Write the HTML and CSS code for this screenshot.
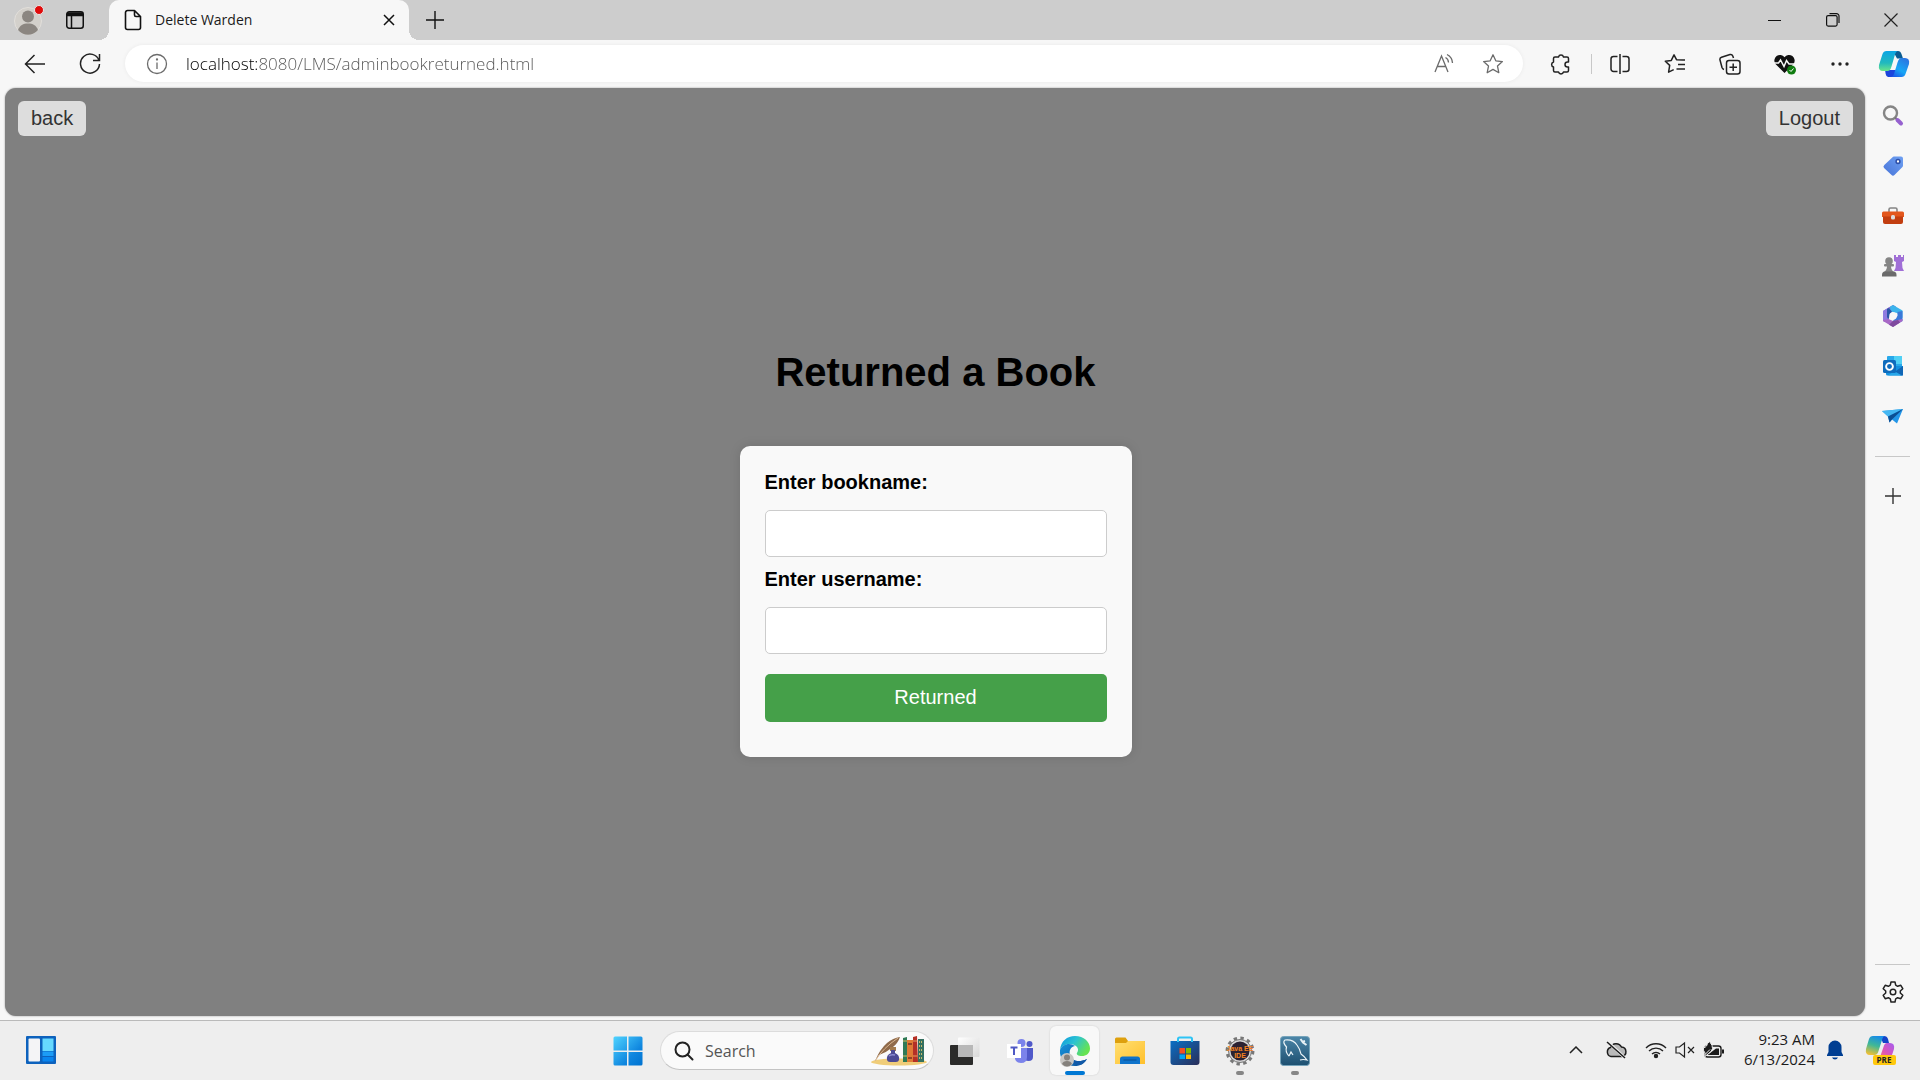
FILE: index.html
```html
<!DOCTYPE html>
<html lang="en">
<head>
<meta charset="utf-8">
<title>Delete Warden</title>
<link rel="stylesheet" href="styles.css">
</head>
<body>
<header class="titlebar">
  <button class="chrome-btn profile" aria-label="Profile">
    <svg width="30" height="32" viewBox="0 0 30 32"><circle cx="14" cy="17" r="13.500" fill="#d3d0cb" stroke="#e2dfdb"/><circle cx="14" cy="12.500" r="6" fill="#8b8681"/><path d="M4 26c2-5 5-6.500 10-6.500S22 21 24 26a13 13 0 0 1-20 0z" fill="#8b8681"/><circle cx="25" cy="6" r="4.500" fill="#e00b0b" stroke="#e8e8e8"/></svg>
  </button>
  <button class="chrome-btn tab-actions" aria-label="Tab actions">
    <svg width="20" height="20" viewBox="0 0 20 20" fill="none" stroke="#111" stroke-width="1.500"><rect x="1.750" y="1.750" width="16.500" height="16.500" rx="2.500"/><path d="M2 3.500h16M2 5h16" stroke-width="2.500"/><path d="M6.500 6v12"/></svg>
  </button>
  <div class="tab">
    <svg width="18" height="22" viewBox="0 0 18 22" fill="none" stroke="#111" stroke-width="1.600" stroke-linejoin="round"><path d="M3.500 1.500h7l6 6v11a2 2 0 0 1-2 2h-11a2 2 0 0 1-2-2v-15a2 2 0 0 1 2-2zM10.500 1.500v4.500a1.500 1.500 0 0 0 1.500 1.500h4.500"/></svg>
    <span class="tab-title">Delete Warden</span>
    <button class="chrome-btn tab-close" aria-label="Close tab"><svg width="12" height="12" viewBox="0 0 12 12" stroke="#111" stroke-width="1.500"><path d="M1 1l10 10M11 1L1 11"/></svg></button>
  </div>
  <button class="chrome-btn new-tab" aria-label="New tab"><svg width="18" height="18" viewBox="0 0 18 18" stroke="#111" stroke-width="1.400"><path d="M9 0v18M0 9h18"/></svg></button>
  <div class="window-controls">
    <button class="chrome-btn" aria-label="Minimize"><svg width="14" height="14" viewBox="0 0 14 14"><path d="M0 7.500h13" stroke="#111"/></svg></button>
    <button class="chrome-btn" aria-label="Restore"><svg width="14" height="14" viewBox="0 0 14 14" fill="none" stroke="#111" stroke-width="1.200"><rect x=".6" y="2.600" width="10.500" height="10.500" rx="1.500"/><path d="M3.500.6h7a2.500 2.500 0 0 1 2.500 2.500v7"/></svg></button>
    <button class="chrome-btn" aria-label="Close"><svg width="14" height="14" viewBox="0 0 14 14" stroke="#222" stroke-width="1.200"><path d="M.5.5l13 13M13.500.5l-13 13"/></svg></button>
  </div>
</header>

<nav class="toolbar" aria-label="Browser toolbar">
  <button class="chrome-btn nav-btn" aria-label="Back"><svg width="22" height="20" viewBox="0 0 22 20" fill="none" stroke="#222" stroke-width="1.500"><path d="M21 10H1.500M10.500 1l-9 9 9 9"/></svg></button>
  <button class="chrome-btn nav-btn" aria-label="Refresh"><svg width="22" height="22" viewBox="0 0 22 22" fill="none" stroke="#222" stroke-width="1.500"><path d="M20 7.500A9.500 9.500 0 1 0 20.500 11M20.500 1v6.500H14"/></svg></button>
  <div class="address">
    <button class="chrome-btn" aria-label="Site information"><svg width="22" height="22" viewBox="0 0 22 22" fill="none" stroke="#6b6b6b" stroke-width="1.300"><circle cx="11" cy="11" r="9.500"/><path d="M11 9.500v6.500"/><circle cx="11" cy="6.500" r=".5" fill="#6b6b6b"/></svg></button>
    <input class="address-input" type="text" aria-label="Address" value="localhost:8080/LMS/adminbookreturned.html">
    <button class="chrome-btn address-btn" aria-label="Read aloud"><svg width="22" height="22" viewBox="0 0 22 22" fill="none" stroke="#6b6b6b" stroke-width="1.300"><path d="M2 19L8.500 3 15 19M4.500 13.500h8"/><path d="M12.500 4.500a6 6 0 0 1 3 5M14 1.500a10 10 0 0 1 5.500 8.500"/></svg></button>
    <button class="chrome-btn address-btn" aria-label="Add to favorites"><svg width="22" height="22" viewBox="0 0 22 22" fill="none" stroke="#6b6b6b" stroke-width="1.300" stroke-linejoin="round"><path d="M11 1.800l2.800 6 6.600.8-4.900 4.500 1.300 6.600-5.800-3.300-5.800 3.300 1.300-6.600L1.600 8.600l6.600-.8z"/></svg></button>
  </div>
  <div class="toolbar-extras">
    <button class="chrome-btn" aria-label="Extensions"><svg width="22" height="22" viewBox="0 0 22 22" fill="none" stroke="#222" stroke-width="1.500" stroke-linejoin="round"><path d="M5 4h3.500a2.600 2.600 0 0 1 5 0H17q1.500 0 1.500 1.500V9h-1a2.500 2.500 0 0 0 0 5h1v3.500q0 1.500-1.500 1.500h-3.500a2.600 2.600 0 0 1-5 0H5q-1.500 0-1.500-1.500V14a2.600 2.600 0 0 1 0-5V5.500Q3.500 4 5 4z"/></svg></button>
    <span class="toolbar-rule"></span>
    <button class="chrome-btn" aria-label="Split screen"><svg width="20" height="22" viewBox="0 0 20 22" fill="none" stroke="#222" stroke-width="1.500"><path d="M7.500 3.500h-4a2.500 2.500 0 0 0-2.500 2.500v10a2.500 2.500 0 0 0 2.500 2.500h4M12.500 3.500h4A2.500 2.500 0 0 1 19 6v10a2.500 2.500 0 0 1-2.500 2.500h-4M10 1v20"/></svg></button>
    <button class="chrome-btn" aria-label="Favorites"><svg width="22" height="22" viewBox="0 0 22 22" fill="none" stroke="#222" stroke-width="1.500" stroke-linejoin="round"><path d="M19 7l-6.500-.3L10 1.800 7.300 7.400l-6 .8 4.400 4.200-1.100 6.800 5.100-2.600M12.500 7H21M14 11.500h7M12.500 16H21"/></svg></button>
    <button class="chrome-btn" aria-label="Collections"><svg width="22" height="22" viewBox="0 0 22 22" fill="none" stroke="#222" stroke-width="1.500"><rect x="7.500" y="7.500" width="13.500" height="13.500" rx="2.500"/><path d="M14.200 10.500v7.500M10.500 14.200H18M5 16.500q-1.500-.5-2-2L1 7Q.5 5 2.500 4.300L11 1.500q2-.5 2.800 1.500l.7 2"/></svg></button>
    <button class="chrome-btn" aria-label="Browser essentials"><svg width="24" height="22" viewBox="0 0 24 22"><path d="M11.500 20L2.500 11A5.600 5.600 0 0 1 11.500 4.200 5.600 5.600 0 0 1 20.500 11z" fill="#111"/><path d="M0 10h5.500l2-3 3.500 6.500 2.500-6 2.500 3.500h6" fill="none" stroke="#f7f7f7" stroke-width="1.500"/><circle cx="18.500" cy="17" r="4.500" fill="#107c10"/><path d="M16.500 17l1.500 1.500 2.500-3" fill="none" stroke="#fff"/></svg></button>
    <button class="chrome-btn" aria-label="Settings and more"><svg width="18" height="6" viewBox="0 0 18 6" fill="#222"><circle cx="2" cy="3" r="1.700"/><circle cx="9" cy="3" r="1.700"/><circle cx="16" cy="3" r="1.700"/></svg></button>
    <button class="chrome-btn copilot-btn" aria-label="Copilot"><svg width="32" height="28" viewBox="0 0 32 28"><defs><linearGradient id="ca" x1="0" y1="0" x2="0" y2="1"><stop offset="0" stop-color="#0aa5e5"/><stop offset=".6" stop-color="#22b9bd"/><stop offset="1" stop-color="#6ae58a"/></linearGradient><linearGradient id="cb" x1=".8" y1="0" x2=".2" y2="1"><stop offset="0" stop-color="#2d74e0"/><stop offset=".6" stop-color="#18a7f5"/><stop offset="1" stop-color="#1a5ae8"/></linearGradient></defs><path d="M15 1h5q2.500 0 3.500 3l1.500 4.500h-6z" fill="#0a5c92"/><path d="M10 27h6l3-7H7l.7 4q.6 3 2.300 3z" fill="#1b45dc"/><path d="M8.500 1H20q-2 0-3 3.500l-3.500 12Q12.300 21 9.500 21H5Q0 21 1 15L4.500 4Q5.500 1 8.500 1z" fill="url(#ca)"/><path d="M23.500 27H13q2 0 3-3l3.500-11.500Q21 8 23 8h4q5 0 4 6l-3.500 10q-1 3-4 3z" fill="url(#cb)"/></svg></button>
  </div>
</nav>

<div class="workspace">
  <main class="page">
    <div class="page-actions">
      <button class="link-btn">back</button>
      <button class="link-btn">Logout</button>
    </div>
    <div class="page-content">
      <h1 class="page-heading">Returned a Book</h1>
      <form class="card">
        <label class="field-label" for="bookname">Enter bookname:</label>
        <input class="field" id="bookname" type="text">
        <label class="field-label" for="username">Enter username:</label>
        <input class="field" id="username" type="text">
        <button class="submit" type="button">Returned</button>
      </form>
    </div>
  </main>
  <aside class="sidebar" aria-label="Sidebar">
    <button class="chrome-btn" aria-label="Search"><svg width="22" height="22" viewBox="0 0 22 22" fill="none"><circle cx="8.500" cy="8" r="6.500" stroke="#858585" stroke-width="2.400"/><path d="M13 12.500l3 3" stroke="#777" stroke-width="2"/><path d="M15.500 15l3.500 3.500" stroke="#9661cf" stroke-width="4" stroke-linecap="round"/></svg></button>
    <button class="chrome-btn" aria-label="Shopping"><svg width="22" height="22" viewBox="0 0 22 22"><defs><linearGradient id="tg" x1="1" y1="0" x2="0" y2="1"><stop offset="0" stop-color="#6ea0f2"/><stop offset="1" stop-color="#4874d8"/></linearGradient></defs><path d="M12 1.500h7q2 0 2 2v7q0 1-.8 1.800l-7.500 7.500q-1.700 1.700-3.400 0l-7-6.500q-1.800-1.700 0-3.400l8-7.500q.7-.9 1.700-.9z" fill="url(#tg)"/><circle cx="16" cy="6.500" r="1.900" fill="#fff" stroke="#2d4fa8" stroke-width="1.500"/></svg></button>
    <button class="chrome-btn" aria-label="Tools"><svg width="22" height="22" viewBox="0 0 22 22"><path d="M7 7V4.500Q7 3 8.500 3h5Q15 3 15 4.500V7" fill="none" stroke="#858585" stroke-width="1.600"/><path d="M0 8q0-1.500 1.500-1.500h19Q22 6.500 22 8v4H0z" fill="#e3571d"/><path d="M1 11.500h20V17q0 2-2 2H3q-2 0-2-2z" fill="#c23e10"/><rect x="9" y="10" width="4" height="4.500" rx="1.500" fill="#ddd"/></svg></button>
    <button class="chrome-btn" aria-label="Games"><svg width="22" height="22" viewBox="0 0 22 22"><path d="M12 0h2v2h2V0h3v2h2V0h1v6l-2 1 .5 6 1.500 3H12l1.500-3 .5-6-2-1z" fill="#a06fd6"/><g fill="#858585"><circle cx="7" cy="6" r="3.800"/><rect x="2" y="9" width="10" height="2.500" rx="1"/><path d="M5 11h4q0 4 3 6H2q3-2 3-6z"/><path d="M0 20q0-3.500 3-3.500h8.500q3 0 3 3.500v1.500H0z" fill="#6b6b6b"/></g></svg></button>
    <button class="chrome-btn" aria-label="Microsoft 365"><svg width="22" height="22" viewBox="0 0 22 22"><path d="M11 0l3 1.600L7.500 7 6.500 15 3 17 1 16V6z" fill="#6f63c6"/><path d="M8 1.800L11 0l9.500 5.500V13L15 8 8.500 6.500z" fill="#3cb4ec"/><path d="M8 1.800L5.500 6v9L1 16V6z" fill="#8e7be0"/><path d="M20.500 6v10l-4 2.300L11 15.500 15.500 11V7z" fill="#3a78d8"/><path d="M1 15l5.500-1 4.500 2 9.500-2v2L11 22 1 16z" fill="#a868c6"/><path d="M11 16l5-1 2 2.500L11 22l-4-2.300z" fill="#7f4a9e"/><path d="M6.500 3L10 6.500 6.500 14 5 12V4z" fill="#2b56a8"/><circle cx="11" cy="11" r="3.800" fill="#f7f7f7"/></svg></button>
    <button class="chrome-btn" aria-label="Outlook"><svg width="22" height="22" viewBox="0 0 22 22"><rect x="5" y="1" width="15" height="14" rx="1" fill="#28a8ea"/><path d="M12 1h8v8h-8z" fill="#50d0f5"/><path d="M4 11h17v8q0 1.500-1.500 1.500h-14Q4 20.500 4 19z" fill="#1490df"/><path d="M21 11L11 18l8 2.500h2z" fill="#1066b5"/><path d="M12 16l8 4.500H6z" fill="#28a8ea"/><rect x="1" y="5" width="13" height="13" rx="1.500" fill="#0f6cbd"/><circle cx="7.500" cy="11.500" r="3.400" fill="none" stroke="#fff" stroke-width="1.900"/></svg></button>
    <button class="chrome-btn" aria-label="Drop"><svg width="22" height="22" viewBox="0 0 22 22"><path d="M0 6l21-2-6 14.500-5-4-2.500 3-1.500-6z" fill="#2396e8"/><path d="M0 6l21-2L6 11.500z" fill="#44b7f2"/><path d="M6 11.500L21 4l-11 10.500-2.500 3z" fill="#0b4f94"/></svg></button>
    <hr class="side-rule">
    <button class="chrome-btn" aria-label="Customize"><svg width="16" height="16" viewBox="0 0 16 16" stroke="#333" stroke-width="1.400"><path d="M8 0v16M0 8h16"/></svg></button>
    <hr class="side-rule side-rule-bottom">
    <button class="chrome-btn" aria-label="Settings"><svg width="24" height="24" viewBox="0 0 24 24" fill="none" stroke="#222" stroke-width="1.500" stroke-linejoin="round"><circle cx="12" cy="12" r="2.800"/><path d="M10 2h4l.7 3.200 1.900 1.100 3.200-1 2 3.400-2.500 2.300v2l2.500 2.300-2 3.400-3.200-1-1.900 1.100L14 22h-4l-.7-3.200-1.900-1.100-3.200 1-2-3.400L4.700 13v-2L2.200 8.700l2-3.400 3.200 1 1.900-1.100z"/></svg></button>
  </aside>
</div>

<footer class="taskbar">
  <div class="task-left">
    <button class="chrome-btn" aria-label="Widgets"><svg width="30" height="28" viewBox="0 0 30 28"><rect width="30" height="28" rx="1" fill="#0d62bd"/><rect x="2.500" y="2.500" width="11.500" height="23" rx="1" fill="#f4f4f6"/><path d="M16.500 2.500h11V15h-11z" fill="#66d9ff"/><path d="M16.500 15.500h11V20h-11z" fill="#1c9cf6"/><path d="M16.500 21h11v4.500h-11z" fill="#0a85ee"/></svg></button>
  </div>
  <div class="task-center">
    <button class="chrome-btn app" aria-label="Start"><svg width="30" height="30" viewBox="0 0 30 30"><defs><linearGradient id="wn" x1="0" y1="0" x2="1" y2="1"><stop offset="0" stop-color="#50d4ff"/><stop offset=".65" stop-color="#0f86df"/><stop offset="1" stop-color="#0072d0"/></linearGradient></defs><path d="M2 .5h12v14H.5V2Q.5.5 2 .5zM15.500.5H28q1.500 0 1.500 1.500v12.500h-14zM.5 16H14v13.500H2Q.5 29.500.5 28zM15.500 16h14v12q0 1.500-1.500 1.500H15.500z" fill="url(#wn)"/></svg></button>
    <label class="search">
      <svg width="20" height="20" viewBox="0 0 20 20" fill="none" stroke="#222" stroke-width="2" stroke-linecap="round"><circle cx="8.500" cy="8.500" r="7"/><path d="M13.500 13.500l5 5"/></svg>
      <input class="search-input" type="text" placeholder="Search" aria-label="Search">
      <svg width="56" height="30" viewBox="0 0 56 30"><ellipse cx="28" cy="26" rx="28" ry="3.500" fill="#f0cd79"/><path d="M4 25Q9 13 16 7 22 2 29 1q-2 6-7 10-6 5-14 8z" fill="#8f6a4a"/><path d="M4 25Q12 12 27 2" fill="none" stroke="#d9b68f"/><path d="M19 11h6v4h-6z" fill="#a37a4b"/><path d="M20 14h4v3q5 2 4 7-.5 2-3 2h-6q-2.500 0-3-2-1-5 4-7z" fill="#4c4a94"/><path d="M18 20q2-2 6-1" stroke="#8c8cd0" stroke-width="1.500" fill="none"/><path d="M32 2l4-1v25h-4z" fill="#2f7a55"/><path d="M32 5h4M32 20h4" stroke="#d5bb62"/><path d="M36 4h6v22h-6z" fill="#e07b35"/><path d="M37 8h4M37 22h4" stroke="#7b3120" stroke-width="1.500"/><path d="M42 1l4-1 1 26h-5z" fill="#b53026"/><path d="M42 5h4.500M42 20h4.500" stroke="#e9a05d"/><path d="M47 3h6v23h-6z" fill="#35705f"/><path d="M48 6h4M48 10h4M48 14h4M48 18h4M48 22h4" stroke="#c6b86b" stroke-dasharray="1 1" stroke-width="2"/></svg>
    </label>
    <button class="chrome-btn app" aria-label="Task view"><svg width="30" height="28" viewBox="0 0 30 28"><defs><linearGradient id="tv" x1="0" y1="0" x2="1" y2="1"><stop offset="0" stop-color="#fff"/><stop offset="1" stop-color="#d8d8d8"/></linearGradient></defs><rect y="8" width="23" height="20" rx="1" fill="#2b2b2a"/><rect x="8" y=".5" width="21.500" height="19.500" rx="1" fill="url(#tv)"/><path d="M8 8h15v12H8z" fill="#b8b8b8"/></svg></button>
    <button class="chrome-btn app" aria-label="Teams"><svg width="28" height="26" viewBox="0 0 28 26"><circle cx="15.500" cy="5" r="4" fill="#7b83eb"/><circle cx="23.500" cy="6" r="3" fill="#5059c9"/><path d="M18 10h9v9q0 4-4.500 4-4.500 0-4.500-4z" fill="#5059c9"/><path d="M9 10h12v9q0 6-6 6-5 0-6-4z" fill="#7b83eb"/><rect x="1" y="6" width="14" height="14" fill="#fff"/><path d="M4.500 9.500h7M8 9.500V17" stroke="#4f58c4" stroke-width="2"/></svg></button>
    <button class="chrome-btn app app-open" aria-label="Microsoft Edge"><span class="tile"><svg width="32" height="32" viewBox="0 0 32 32"><defs><linearGradient id="ea" x1="0" y1="0" x2="1" y2=".5"><stop offset="0" stop-color="#0a94e0"/><stop offset=".5" stop-color="#2bc3d2"/><stop offset="1" stop-color="#65e352"/></linearGradient><linearGradient id="eb" x1="0" y1="0" x2="1" y2="1"><stop offset="0" stop-color="#1694dc"/><stop offset="1" stop-color="#0a4d98"/></linearGradient></defs><path d="M1 15C2 6 8 1 16 1c9 0 15 6 15 12.500 0 5-4 7.500-8 7.500-4 0-6-1.500-5-3q2.500-4-1-7C12 7 3 9 1 15z" fill="url(#ea)"/><path d="M1 15c2-6 10-8 15-4-5 1-6 5-5 9 1.500 6 9 8 17 4-3 5-7 7-12 7C7 31 0 24 1 15z" fill="url(#eb)"/><path d="M11 20c1.500 6 9 8 17 4-2 3-5 5.500-8 6.300C14 29 10 26 11 20z" fill="#125aa8"/><circle cx="8" cy="25" r="7" fill="#c9c7c4"/><circle cx="8" cy="22.500" r="3" fill="#85817c"/><path d="M3 29q1-3 5-3t5 3q-5 5-10 0z" fill="#85817c"/></svg></span></button>
    <button class="chrome-btn app" aria-label="File Explorer"><svg width="30" height="28" viewBox="0 0 30 28"><defs><linearGradient id="fo" x1="0" y1="0" x2="1" y2="1"><stop offset="0" stop-color="#ffdf72"/><stop offset="1" stop-color="#ffc02c"/></linearGradient></defs><path d="M0 2q0-1.500 1.500-1.500h9L13 4h16q1 0 1 1v5H0z" fill="#dea00d"/><path d="M0 6h11l2-2h16q1 0 1 1v22H0z" fill="url(#fo)"/><path d="M5 27v-5q0-2.500 2.500-2.500h15q2.500 0 2.500 2.500v5z" fill="#0e73cb"/><path d="M8.500 23h13" stroke="#094e91"/></svg></button>
    <button class="chrome-btn app" aria-label="Microsoft Store"><svg width="30" height="30" viewBox="0 0 30 30"><defs><linearGradient id="st" x1="0" y1="0" x2="1" y2="1"><stop offset="0" stop-color="#0a6fc5"/><stop offset="1" stop-color="#2a2e58"/></linearGradient></defs><path d="M.5 5h29v21q0 3-3 3h-23q-3 0-3-3z" fill="url(#st)"/><path d="M8 6V3q0-1.500 1.500-1.500h11Q22 1.500 22 3v3" fill="none" stroke="#2ec4f5" stroke-width="2"/><path d="M9.500 12H15v5.500H9.500z" fill="#f25022"/><path d="M16 12h5v5.500h-5z" fill="#7fba00"/><path d="M9.500 18.500H15V23H9.500z" fill="#00a4ef"/><path d="M16 18.500h5V23h-5z" fill="#ffb900"/></svg></button>
    <button class="chrome-btn app app-running" aria-label="Eclipse"><svg width="30" height="30" viewBox="0 0 30 30"><circle cx="15" cy="15" r="12.700" fill="none" stroke="#777" stroke-width="3.500" stroke-dasharray="3.300 3.350"/><circle cx="15" cy="15" r="11.500" fill="#d6d6d6" stroke="#777"/><circle cx="15" cy="15" r="9.500" fill="#2b2232"/><text x="15" y="15" text-anchor="middle" class="eclipse-text">Java EE</text><text x="15" y="22" text-anchor="middle" class="eclipse-text">IDE</text></svg></button>
    <button class="chrome-btn app app-running" aria-label="MySQL Workbench"><svg width="30" height="30" viewBox="0 0 30 30"><defs><linearGradient id="my" x1="0" y1="0" x2="0" y2="1"><stop offset="0" stop-color="#4c86a8"/><stop offset="1" stop-color="#1d4f70"/></linearGradient></defs><rect x=".5" y=".5" width="29" height="29" rx="3" fill="url(#my)" stroke="#75a3ba"/><path d="M9 20Q5 16 6.500 11 2 6 5 4q8-1 12 5 3 4 4 9 3 2 6 6-4-1-7 0M9 20l2-4 2 3" fill="none" stroke="#edf5f9" stroke-width="1.200"/><path d="M20.500 3l2.500 3.500L26.500 9M22 6l3-1" stroke="#e6f0f5" stroke-width="2" fill="none"/></svg></button>
  </div>
  <div class="tray">
    <button class="chrome-btn" aria-label="Show hidden icons"><svg width="14" height="8" viewBox="0 0 14 8" fill="none" stroke="#222" stroke-width="1.500"><path d="M1 7l6-6 6 6"/></svg></button>
    <button class="chrome-btn" aria-label="OneDrive"><svg width="22" height="18" viewBox="0 0 22 18" fill="none" stroke="#1b1b1b" stroke-width="1.500"><path d="M6 15.500a4.700 4.700 0 0 1-.5-9 6 6 0 0 1 11-.5 4.800 4.800 0 0 1 .5 9.500z" fill="#b9b9b9"/><path d="M3 1l17 16" stroke="#eee" stroke-width="3"/><path d="M2 1l18 16"/></svg></button>
    <button class="chrome-btn quick" aria-label="Network, volume and battery">
      <svg width="22" height="18" viewBox="0 0 22 18" fill="none" stroke="#222" stroke-width="1.400"><path d="M1 7a14 14 0 0 1 20 0M4 10a10 10 0 0 1 14 0M7 13a6 6 0 0 1 8 0"/><circle cx="11" cy="15" r="1.500" fill="#222"/></svg>
      <svg width="20" height="18" viewBox="0 0 20 18" fill="none" stroke="#222" stroke-width="1.200"><path d="M1 6h3.500L9.500 2v14l-5-4H1zM13 6l6 6M19 6l-6 6"/></svg>
      <svg width="22" height="18" viewBox="0 0 22 18"><rect x="2" y="5" width="16" height="11" rx="2.500" fill="#eee" stroke="#1b1b1b" stroke-width="1.400"/><path d="M4.500 14L13 7.500h3V14zM19 8.500h2v4h-2z" fill="#1b1b1b"/><path d="M6.500.5q3.500 4 3 7t-4 5L2 15.500V12Q-.5 9 .5 6.500 2 7 3.500 5 4 2.500 6.500.5z" fill="#1b1b1b" stroke="#eee"/><path d="M2 13.500l5-5" stroke="#eee"/></svg>
    </button>
    <button class="chrome-btn clock"><span>9:23 AM</span><span>6/13/2024</span></button>
    <button class="chrome-btn" aria-label="Notifications"><svg width="16" height="20" viewBox="0 0 16 20" fill="#003e92"><path d="M8 .5a6.500 6.500 0 0 1 6.500 6.500v5l1.500 3v1H0v-1l1.500-3V7A6.500 6.500 0 0 1 8 .5zM5 17.500h6q-.8 2-3 2t-3-2z"/></svg></button>
    <button class="chrome-btn" aria-label="Copilot preview"><svg width="32" height="32" viewBox="0 0 32 32"><defs><linearGradient id="pa" x1=".6" y1="0" x2=".3" y2="1"><stop offset="0" stop-color="#168be8"/><stop offset=".5" stop-color="#40b896"/><stop offset="1" stop-color="#f0bf35"/></linearGradient><linearGradient id="pb" x1="1" y1="0" x2="0" y2="1"><stop offset="0" stop-color="#a45df0"/><stop offset=".5" stop-color="#dc54b8"/><stop offset="1" stop-color="#ff8858"/></linearGradient></defs><path d="M15 2h4q3 0 4 3l1 4h-6z" fill="#1444c8"/><path d="M8 2h12q-2 0-3 4l-3.500 11q-1 4-4 4H5q-5 0-4-6L4 5q1-3 4-3z" fill="url(#pa)"/><path d="M12 27q2 0 3-4l3.500-10Q19.500 9 22 9h3q5 0 4 6l-3 9q-1 3-4 3z" fill="url(#pb)"/><rect x="8" y="21" width="23" height="10" rx="2" fill="#ffc80c"/><text x="19" y="29" text-anchor="middle" class="pre-text">PRE</text></svg></button>
  </div>
</footer>
</body>
</html>
```
FILE: styles.css
```css
* { box-sizing: border-box; }

body {
  margin: 0;
  min-height: 100vh;
  display: flex;
  flex-direction: column;
  background: #f7f7f7;
  color: #1b1b1b;
  font-family: "Open Sans", "Noto Sans", sans-serif;
}

svg { display: block; flex: none; }

.chrome-btn {
  display: flex;
  align-items: center;
  justify-content: center;
  padding: 0;
  border: 0;
  background: none;
  color: inherit;
  font: inherit;
}

/* Tab strip */
.titlebar {
  display: flex;
  align-items: stretch;
  height: 40px;
  background: #cdcdcd;
}
.profile { width: 56px; padding-left: 2px; }
.tab-actions { width: 38px; }
.tab {
  position: relative;
  display: flex;
  align-items: center;
  gap: 13px;
  width: 300px;
  margin-left: 15px;
  padding: 0 12px 1px 15px;
  border-radius: 10px 10px 0 0;
  background: #f7f7f7;
}
.tab::before,
.tab::after {
  content: "";
  position: absolute;
  bottom: 0;
  width: 10px;
  height: 10px;
}
.tab::before {
  right: 100%;
  background: radial-gradient(circle at 0 0, #cdcdcd 10px, #f7f7f7 10px);
}
.tab::after {
  left: 100%;
  background: radial-gradient(circle at 100% 0, #cdcdcd 10px, #f7f7f7 10px);
}
.tab-title { flex: 1; font-size: 14px; }
.tab-close { width: 16px; }
.new-tab { width: 52px; }
.window-controls { display: flex; margin-left: auto; }
.window-controls .chrome-btn { width: 58px; }

/* Toolbar */
.toolbar {
  display: flex;
  align-items: center;
  height: 48px;
  padding: 0 0 1px 7px;
}
.nav-btn { width: 55px; height: 40px; }
.address {
  flex: 1;
  display: flex;
  align-items: center;
  height: 37px;
  margin-left: 8px;
  padding: 0 6px 0 21px;
  border-radius: 19px;
  background: #fff;
  box-shadow: 0 0 4px rgba(0, 0, 0, 0.06);
}
.address-input {
  flex: 1;
  min-width: 0;
  margin-left: 18px;
  padding: 0;
  border: 0;
  outline: 0;
  font-family: inherit;
  font-size: 17px;
  font-weight: 300;
  color: transparent;
  background: linear-gradient(90deg, #000 72px, #555 72px);
  -webkit-background-clip: text;
  background-clip: text;
}
.address-btn { width: 49px; height: 36px; }
.toolbar-extras { display: flex; align-items: center; margin-left: 10px; }
.toolbar-extras .chrome-btn { width: 55px; height: 40px; }
.toolbar-extras .copilot-btn { width: 53px; }
.toolbar-rule { width: 1px; height: 20px; margin-left: 3px; background: #c8c8c8; }

/* Page area and sidebar */
.workspace { flex: 1; display: flex; }
.page {
  flex: 1;
  display: flex;
  flex-direction: column;
  margin: 0 0 4px 5px;
  padding: 13px 12px 12px 13px;
  border-radius: 11px;
  background: #808080;
  box-shadow: 0 0 2px rgba(0, 0, 0, 0.4);
  font-family: "Liberation Sans", Arial, sans-serif;
}
.page-actions {
  display: flex;
  justify-content: space-between;
  margin-bottom: -35px;
}
.link-btn {
  height: 35px;
  padding: 0 13px;
  border: 0;
  border-radius: 6px;
  background: #ddd;
  color: #333;
  font-family: inherit;
  font-size: 20px;
}
.page-content {
  flex: 1;
  display: flex;
  flex-direction: column;
  align-items: center;
  justify-content: center;
}
.page-heading {
  margin: 0 0 51px;
  color: #000;
  font-size: 40px;
  line-height: 46px;
}
.card {
  display: flex;
  flex-direction: column;
  width: 392px;
  padding: 24px 25px 35px;
  border-radius: 10px;
  background: #f9f9f9;
  box-shadow: 0 0 12px rgba(0, 0, 0, 0.12);
}
.field-label {
  margin-bottom: 16px;
  color: #000;
  font-size: 20px;
  font-weight: bold;
  line-height: 24px;
}
.field {
  height: 47px;
  margin-bottom: 10px;
  padding: 0 12px;
  border: 1px solid #ccc;
  border-radius: 5px;
  background: #fff;
  font-family: inherit;
  font-size: 20px;
}
.submit {
  height: 48px;
  margin-top: 10px;
  border: 0;
  border-radius: 5px;
  background: #45a049;
  color: #fff;
  font-family: inherit;
  font-size: 20px;
}

.sidebar {
  display: flex;
  flex-direction: column;
  align-items: center;
  width: 55px;
  padding: 3px 0;
}
.sidebar .chrome-btn { width: 50px; height: 50px; }
.side-rule {
  width: 35px;
  height: 1px;
  margin: 15px 0 14px;
  border: 0;
  background: #c8c8c8;
}
.side-rule-bottom { margin: auto 0 2px; }

/* Taskbar */
.taskbar {
  display: grid;
  grid-template-columns: 1fr auto 1fr;
  height: 60px;
  border-top: 1px solid #bababa;
  background: #eee;
}
.task-left { display: flex; align-items: center; padding: 0 0 1px 26px; }
.task-center { display: flex; align-items: center; padding-left: 2px; }
.app { position: relative; width: 55px; height: 59px; }
.tile {
  display: flex;
  align-items: center;
  justify-content: center;
  width: 49px;
  height: 49px;
  border-radius: 6px;
  background: #f8f8f8;
  box-shadow: 0 0 2px rgba(0, 0, 0, 0.15);
}
.app-open::after,
.app-running::after {
  content: "";
  position: absolute;
  left: 50%;
  bottom: 5px;
  height: 4px;
  border-radius: 2px;
}
.app-open::after { width: 20px; margin-left: -10px; background: #0078d4; }
.app-running::after { width: 8px; margin-left: -4px; background: #868686; }
.search {
  display: flex;
  align-items: center;
  width: 274px;
  height: 39px;
  margin: 0 3px 0 5px;
  padding: 0 6px 0 13px;
  border: 1px solid #dcdcdc;
  border-bottom-color: #c4c4c4;
  border-radius: 20px;
  background: #fafafa;
}
.search-input {
  flex: 1;
  min-width: 0;
  margin-left: 11px;
  padding: 0;
  border: 0;
  outline: 0;
  background: none;
  font-family: inherit;
  font-size: 16px;
}
.search-input::placeholder { color: #555; opacity: 1; }
.eclipse-text {
  fill: #f58220;
  font-family: "Liberation Sans", sans-serif;
  font-size: 7px;
  font-weight: bold;
}
.pre-text {
  fill: #222;
  font-family: "Open Sans", sans-serif;
  font-size: 8px;
  font-weight: bold;
}
.tray {
  display: flex;
  align-items: center;
  justify-content: flex-end;
  gap: 12px;
  padding: 0 23px 2px 0;
}
.tray > .chrome-btn:first-child { margin-right: 10px; }
.quick { gap: 8px; margin-left: 6px; }
.clock {
  flex-direction: column;
  align-items: flex-end;
  margin-left: 7px;
  padding-bottom: 2px;
  font-size: 15px;
  line-height: 20px;
}
.tray .clock + .chrome-btn { margin-right: 10px; }
```
